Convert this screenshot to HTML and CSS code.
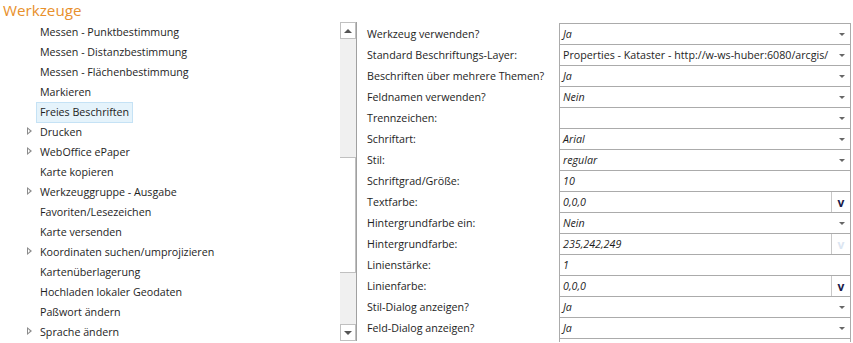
FILE: index.html
```html
<!DOCTYPE html>
<html>
<head>
    <title>Werkzeuge</title>
    <link rel="stylesheet" href="styles.css">
</head>
<body>
    <h1 class="title">Werkzeuge</h1>
    <div class="content">
        <ul class="tree">
            <li>Messen - Punktbestimmung</li>
            <li>Messen - Distanzbestimmung</li>
            <li>Messen - Flächenbestimmung</li>
            <li>Markieren</li>
            <li><span class="selected">Freies Beschriften</span></li>
            <li class="has-children">Drucken</li>
            <li class="has-children">WebOffice ePaper</li>
            <li>Karte kopieren</li>
            <li class="has-children">Werkzeuggruppe - Ausgabe</li>
            <li>Favoriten/Lesezeichen</li>
            <li>Karte versenden</li>
            <li class="has-children">Koordinaten suchen/umprojizieren</li>
            <li>Kartenüberlagerung</li>
            <li>Hochladen lokaler Geodaten</li>
            <li>Paßwort ändern</li>
            <li class="has-children">Sprache ändern</li>
        </ul>

        <div class="scrollbar">
            <div class="scroll-btn"><span class="arrow-up"></span></div>
            <div class="track"></div>
            <div class="thumb"></div>
            <div class="track short"></div>
            <div class="scroll-btn"><span class="arrow-down"></span></div>
        </div>

        <div class="props">
            <div class="labels">
                <div>Werkzeug verwenden?</div>
                <div>Standard Beschriftungs-Layer:</div>
                <div>Beschriften über mehrere Themen?</div>
                <div>Feldnamen verwenden?</div>
                <div>Trennzeichen:</div>
                <div>Schriftart:</div>
                <div>Stil:</div>
                <div>Schriftgrad/Größe:</div>
                <div>Textfarbe:</div>
                <div>Hintergrundfarbe ein:</div>
                <div>Hintergrundfarbe:</div>
                <div>Linienstärke:</div>
                <div>Linienfarbe:</div>
                <div>Stil-Dialog anzeigen?</div>
                <div>Feld-Dialog anzeigen?</div>
            </div>
            <div class="values">
                <div class="field select"><span class="val">Ja</span></div>
                <div class="field select"><span class="plain">Properties - Kataster - http://w-ws-huber:6080/arcgis/</span></div>
                <div class="field select"><span class="val">Ja</span></div>
                <div class="field select"><span class="val">Nein</span></div>
                <div class="field select"><span class="val"></span></div>
                <div class="field select"><span class="val">Arial</span></div>
                <div class="field select"><span class="val">regular</span></div>
                <div class="field"><span class="val">10</span></div>
                <div class="field color"><span class="val">0,0,0</span><span class="pick">v</span></div>
                <div class="field select"><span class="val">Nein</span></div>
                <div class="field color"><span class="val">235,242,249</span><span class="pick disabled">v</span></div>
                <div class="field"><span class="val">1</span></div>
                <div class="field color"><span class="val">0,0,0</span><span class="pick">v</span></div>
                <div class="field select"><span class="val">Ja</span></div>
                <div class="field select"><span class="val">Ja</span></div>
            </div>
        </div>
    </div>
</body>
</html>
```

FILE: styles.css
```css
body {
    margin: 0;
    background-color: #fff;
    font-family: "Open Sans", "Noto Sans", sans-serif;
    font-size: 10.7px;
    color: #1e1e1e;
}

.title {
    margin: 0;
    height: 22px;
    padding-left: 3px;
    font-size: 15.2px;
    font-weight: normal;
    line-height: 21px;
    color: #e8902c;
}

.content {
    display: flex;
}

/* tree on the left */
.tree {
    list-style: none;
    margin: 0;
    padding: 0;
    width: 340px;
}

.tree li {
    height: 20px;
    line-height: 20px;
    padding-left: 40px;
    position: relative;
}

.tree li.has-children::before {
    content: "";
    position: absolute;
    left: 27px;
    top: 5px;
    width: 0;
    height: 0;
    border-top: 4.5px solid transparent;
    border-bottom: 4.5px solid transparent;
    border-left: 5px solid #8c8c8c;
}

.tree li.has-children::after {
    content: "";
    position: absolute;
    left: 28px;
    top: 7px;
    width: 0;
    height: 0;
    border-top: 2.5px solid transparent;
    border-bottom: 2.5px solid transparent;
    border-left: 2.8px solid #fff;
}

.selected {
    display: inline-block;
    margin-left: -4px;
    padding: 0 3px;
    height: 19px;
    line-height: 19px;
    background-color: #e5f3fb;
    border: 1px solid #c5e2f5;
}

/* scrollbar */
.scrollbar {
    width: 16px;
    height: 319px;
    border-right: 1px solid #a0a0a0;
    display: flex;
    flex-direction: column;
    background-color: #f0f0f0;
}

.scroll-btn {
    height: 15px;
    border: 1px solid #c0c0c0;
    background-color: #fff;
    display: flex;
    align-items: center;
    justify-content: center;
}

.arrow-up {
    border-left: 4px solid transparent;
    border-right: 4px solid transparent;
    border-bottom: 4px solid #555;
}

.arrow-down {
    border-left: 4px solid transparent;
    border-right: 4px solid transparent;
    border-top: 4px solid #555;
}

.track {
    height: 118px;
}

.track.short {
    height: 51px;
}

.thumb {
    height: 114px;
    border: 1px solid #c0c0c0;
    border-left: none;
    background-color: #fff;
}

/* property grid */
.props {
    display: flex;
    padding-top: 1px;
}

.labels {
    width: 192px;
    padding-left: 10px;
    padding-top: 1px;
}

.labels div {
    height: 21px;
    line-height: 21px;
}

.values {
    width: 290px;
    border: 1px solid #ababab;
    border-bottom: none;
}

.field {
    height: 20px;
    line-height: 21px;
    border-bottom: 1px solid #ababab;
    display: flex;
    position: relative;
}

.field .val {
    flex: 1;
    padding-left: 3px;
    font-style: italic;
}

.field .plain {
    flex: 1;
    padding-left: 3px;
}

.field.select::after {
    content: "";
    position: absolute;
    right: 5px;
    top: 9px;
    border-left: 3.5px solid transparent;
    border-right: 3.5px solid transparent;
    border-top: 3.5px solid #666;
}

.pick {
    width: 18px;
    border-left: 1px solid #c8c8c8;
    text-align: center;
    font-weight: bold;
    font-size: 12px;
    color: #1a1a4a;
}

.pick.disabled {
    color: #dce6f2;
}
```
